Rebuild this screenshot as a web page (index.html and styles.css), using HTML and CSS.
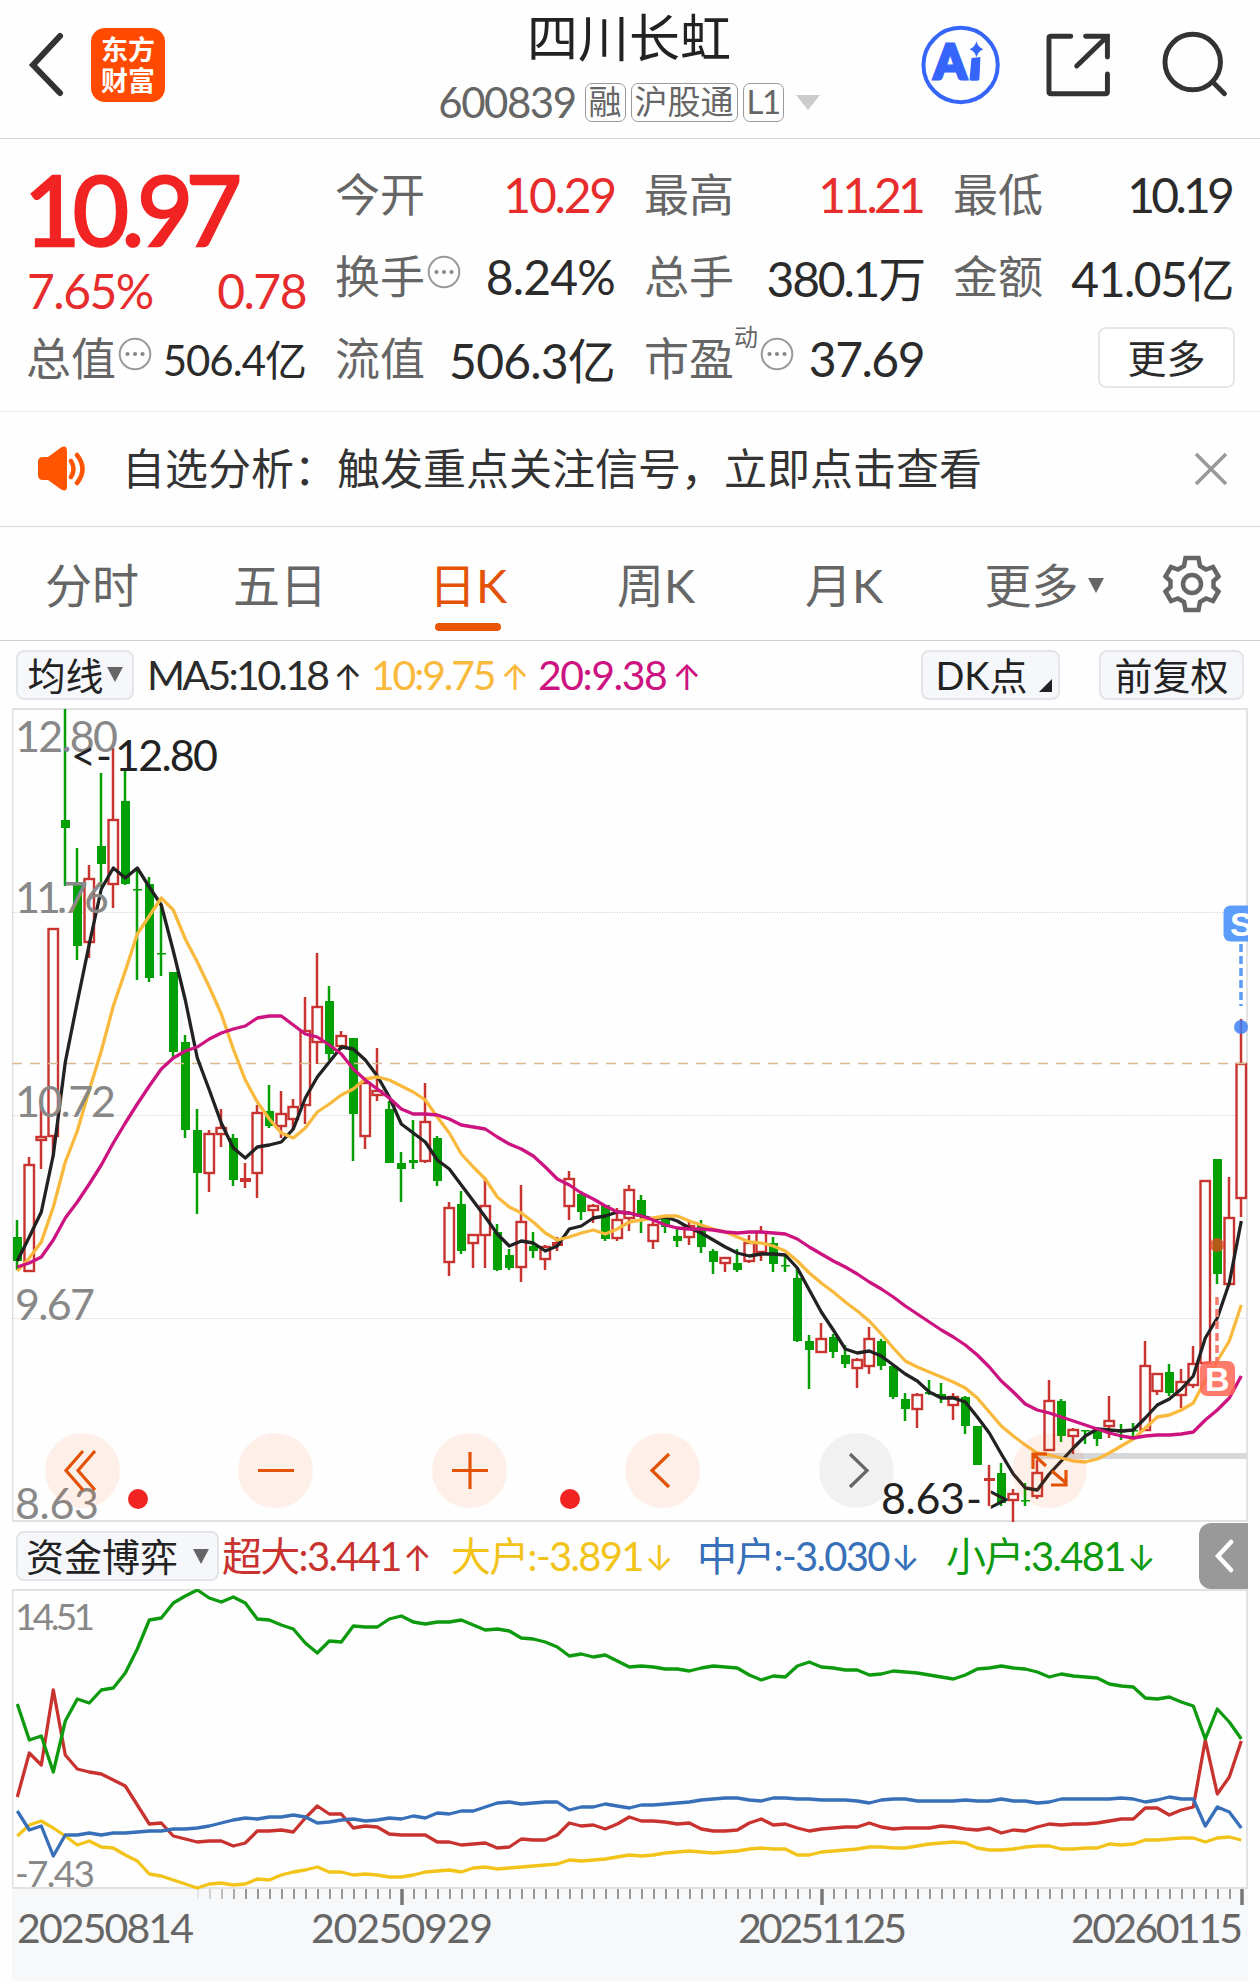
FILE: index.html
```html
<!DOCTYPE html>
<html lang="zh-CN">
<head>
    <meta charset="UTF-8">
    <meta name="viewport" content="width=device-width, initial-scale=1.0">
    <title>四川长虹 600839</title>
    <link rel="stylesheet" href="styles.css">
</head>
<body>

    <header class="topbar">
        <div class="topbar-left">
            <svg class="back" width="36" height="74" viewBox="0 0 36 74"><path d="M32 4 L5 33 L32 61" transform="translate(0 4)"/></svg>
            <div class="logo"><span>东方</span><span>财富</span></div>
        </div>
        <div class="stock">
            <h1>四川长虹</h1>
            <div class="code-row">
                <span class="code">600839</span>
                <span class="badge">融</span>
                <span class="badge">沪股通</span>
                <span class="badge">L1</span>
                <i class="tri tri-light"></i>
            </div>
        </div>
        <div class="topbar-right">
            <svg width="82" height="82" viewBox="0 0 82 82">
                <circle cx="41" cy="41" r="37.5" fill="none" stroke="#3565fb" stroke-width="4"/>
                <text class="ai" x="14" y="55">A</text>
                <path d="M52 34 L61 33 L60 55 Q60 57 58 57 L52 57 Q50 57 50 55 Z" fill="#3565fb"/>
                <path d="M57 17 Q58.500 23 64 25 Q58.500 27 57 33 Q55.500 27 50 25 Q55.500 23 57 17 Z" fill="#3565fb"/>
            </svg>
            <svg width="66" height="66" viewBox="0 0 66 66" class="line-icon">
                <path d="M25 4 H5 Q3 4 3 6 V60 Q3 62 5 62 H60 Q62 62 62 60 V42"/>
                <path d="M40 4 H62 V25 M61 5 L31 34"/>
            </svg>
            <svg width="68" height="68" viewBox="0 0 68 68" class="line-icon search">
                <circle cx="31" cy="31" r="28"/>
                <path d="M51 51 L63 63"/>
            </svg>
        </div>
    </header>

    <section class="quote">
        <div class="col">
            <div class="price">10.97</div>
            <div class="change"><span>7.65%</span><span>0.78</span></div>
            <div class="cell small"><label>总值<svg class="dots"><use href="#dots"/></svg></label><b>506.4亿</b></div>
        </div>
        <div class="col">
            <div class="cell"><label>今开</label><b class="red tight">10.29</b></div>
            <div class="cell"><label>换手<svg class="dots"><use href="#dots"/></svg></label><b class="loose">8.24%</b></div>
            <div class="cell"><label>流值</label><b class="loose">506.3亿</b></div>
        </div>
        <div class="col">
            <div class="cell"><label>最高</label><b class="red tighter">11.21</b></div>
            <div class="cell"><label>总手</label><b class="tight">380.1万</b></div>
            <div class="cell"><label>市盈<sup>动</sup><svg class="dots"><use href="#dots"/></svg></label><b>37.69</b></div>
        </div>
        <div class="col">
            <div class="cell"><label>最低</label><b class="tighter">10.19</b></div>
            <div class="cell"><label>金额</label><b>41.05亿</b></div>
            <div class="cell right"><button class="more">更多</button></div>
        </div>
    </section>

    <section class="notice">
        <svg width="50" height="48" viewBox="0 0 50 48">
            <path d="M1 17 Q1 12 6 12 H11 L22 4 Q30 -2 30 7 V41 Q30 49 22 43 L11 35 H6 Q1 35 1 30 Z" fill="#ff5400"/>
            <path d="M34 16 Q39 24 34 32 M40 10 Q51 24 40 38" fill="none" stroke="#ff5400" stroke-width="4.5" stroke-linecap="round"/>
        </svg>
        <p>自选分析：触发重点关注信号，立即点击查看</p>
        <svg class="close" width="34" height="34" viewBox="0 0 34 34"><path d="M2 2 L32 32 M32 2 L2 32"/></svg>
    </section>

    <nav class="tabs">
        <a>分时</a>
        <a>五日</a>
        <a class="active">日K</a>
        <a>周K</a>
        <a>月K</a>
        <a class="tab-more">更多<i class="tri tri-tab"></i></a>
        <svg class="gear" width="58" height="60" viewBox="0 0 58 60">
            <path d="M22.500 4 H35.500 L37 12 L43 15.500 L50 13 L55.500 22.500 L50.500 27 V33 L55.500 37.500 L50 47 L43 44.500 L37 48 L35.500 56 H22.500 L21 48 L15 44.500 L8 47 L2.500 37.500 L7.500 33 V27 L2.500 22.500 L8 13 L15 15.500 L21 12 Z"/>
            <circle cx="29" cy="30" r="9"/>
        </svg>
    </nav>

    <div class="bar ma-bar">
        <button class="chip chip-ma">均线<i class="tri tri-chip"></i></button>
        <span class="ma ma5">MA5:10.18<em>↑</em></span>
        <span class="ma ma10">10:9.75<em>↑</em></span>
        <span class="ma ma20">20:9.38<em>↑</em></span>
        <button class="chip chip-dk">DK点<i class="corner"></i></button>
        <button class="chip chip-fq">前复权</button>
    </div>

    <div class="chart">
        <svg id="kline" width="1236" height="814" viewBox="12 708 1236 814"></svg>
        <div class="tools">
            <span><svg viewBox="0 0 75 75"><path d="M38 18 L21 37.500 L38 57 M50 18 L33 37.500 L50 57"/></svg></span>
            <span><svg viewBox="0 0 75 75"><path d="M20 37.500 H56"/></svg></span>
            <span><svg viewBox="0 0 75 75"><path d="M20 37.500 H56 M38 19 V56"/></svg></span>
            <span><svg viewBox="0 0 75 75"><path d="M44 21 L27 37.500 L44 54"/></svg></span>
            <span class="off"><svg viewBox="0 0 75 75"><path d="M31 21 L48 37.500 L31 54"/></svg></span>
            <span><svg viewBox="0 0 75 75"><path d="M21 36 V21 H35 M21 21 L34 33 M40 38 L54 50 M54 37 V52 H39"/></svg></span>
        </div>
    </div>

    <div class="bar fund-bar">
        <button class="chip chip-fund">资金博弈<i class="tri tri-chip"></i></button>
        <span class="fund f1">超大:3.441<em>↑</em></span>
        <span class="fund f2">大户:-3.891<em>↓</em></span>
        <span class="fund f3">中户:-3.030<em>↓</em></span>
        <span class="fund f4">小户:3.481<em>↓</em></span>
        <span class="collapse"><svg width="20" height="34" viewBox="0 0 20 34"><path d="M17 3 L4 17 L17 31"/></svg></span>
    </div>

    <div class="chart sub">
        <svg id="fund" width="1236" height="393" viewBox="12 1589 1236 393"></svg>
    </div>

    <svg class="defs">
        <symbol id="dots" viewBox="0 0 34 34">
            <circle cx="17" cy="17" r="15.300" fill="none" stroke="#999" stroke-width="2"/>
            <circle cx="9.500" cy="17" r="2.100" fill="#888"/>
            <circle cx="17" cy="17" r="2.100" fill="#888"/>
            <circle cx="24.500" cy="17" r="2.100" fill="#888"/>
        </symbol>
    </svg>

    <script src="chart.js"></script>
</body>
</html>
```

FILE: styles.css
```css
* {
    box-sizing: border-box;
}

body {
    margin: 0;
    width: 1260px;
    height: 1984px;
    overflow: hidden;
    background: #fefefe;
    color: #2b2b2b;
    font-family: Lato, "Noto Sans CJK SC", sans-serif;
    font-weight: 400;
}

button {
    font: inherit;
    color: inherit;
    padding: 0;
}

.defs {
    display: none;
}

.tri {
    display: inline-block;
    border-style: solid;
    border-color: #666 transparent transparent;
    border-width: 15px 8px 0;
}

/* 顶部栏 */
.topbar {
    display: flex;
    justify-content: space-between;
    height: 139px;
    padding: 0 30px 0 28px;
    border-bottom: 1px solid #d5d5d5;
}

.topbar-left,
.topbar-right {
    display: flex;
    align-items: center;
    width: 310px;
    height: 130px;
}

.topbar-right {
    justify-content: flex-end;
    gap: 45px;
    height: 129px;
    padding-right: 1px;
}

.search {
    margin-left: 5px;
}

.back {
    fill: none;
    stroke: #333;
    stroke-width: 6;
    stroke-linecap: round;
}

.logo {
    display: flex;
    flex-direction: column;
    align-items: center;
    justify-content: center;
    width: 74px;
    height: 74px;
    margin-left: 27px;
    border-radius: 14px;
    background: #ff4a00;
    color: #fff;
    font-size: 27px;
    font-weight: 700;
    line-height: 31px;
}

.stock {
    text-align: center;
}

.stock h1 {
    margin: 0;
    font-size: 51px;
    font-weight: 400;
    line-height: 76px;
    color: #222;
}

.code-row {
    display: flex;
    align-items: center;
    justify-content: center;
    margin-top: 6px;
    gap: 5px;
    height: 40px;
    color: #666;
}

.code {
    font-size: 42px;
    letter-spacing: -1.500px;
    margin-right: 4px;
}

.badge {
    height: 39px;
    padding: 0 3px;
    border: 1.500px solid #999;
    border-radius: 7px;
    font-size: 33px;
    line-height: 35px;
}

.badge:nth-child(4) {
    letter-spacing: -1.500px;
}

.tri-light {
    margin-left: 7px;
    border-top-color: #ccc;
    border-width: 15px 12px 0;
}

.ai {
    font-family: Lato, sans-serif;
    font-size: 47px;
    font-weight: 900;
    fill: #3565fb;
    stroke: #3565fb;
    stroke-width: 3;
}

.line-icon {
    fill: none;
    stroke: #333;
    stroke-width: 5;
    stroke-linecap: round;
}

/* 行情数据 */
.quote {
    display: grid;
    grid-template-columns: repeat(4, 279px);
    column-gap: 30px;
    height: 273px;
    padding: 14px 0 0 27px;
    border-bottom: 1px solid #ececec;
}

.cell {
    display: flex;
    align-items: center;
    justify-content: space-between;
    height: 82px;
    font-size: 45px;
}

.cell.right {
    justify-content: flex-end;
}

.cell label {
    display: flex;
    align-items: center;
    margin: -3px 0 0 -1px;
    color: #666;
    white-space: nowrap;
}

.cell b {
    font-size: 48px;
    font-weight: 400;
    letter-spacing: -1.500px;
    white-space: nowrap;
}

.cell.small b {
    margin-top: -2px;
    font-size: 42px;
    letter-spacing: -1px;
}

.cell .loose {
    letter-spacing: -0.800px;
}

.cell .tight {
    letter-spacing: -2.200px;
}

.cell .tighter {
    margin-right: 2px;
    letter-spacing: -3.800px;
}

.cell .red,
.change {
    color: #e62c2c;
}

.cell sup {
    margin: -40px 0 0;
    font-size: 24px;
    line-height: 30px;
}

.dots {
    width: 34px;
    height: 34px;
    margin: -5px 0 0 2px;
}

.price {
    height: 94px;
    margin-left: -3px;
    padding-top: 9px;
    font-size: 97px;
    line-height: 94px;
    letter-spacing: -7.500px;
    color: #f12323;
    -webkit-text-stroke: 2.500px #f12323;
}

.change {
    display: flex;
    justify-content: space-between;
    height: 70px;
    font-size: 48px;
    line-height: 88px;
    letter-spacing: -1.500px;
}

.more {
    width: 137px;
    height: 61px;
    margin: -1px -2px 0 0;
    border: 2px solid #e6e6e6;
    border-radius: 8px;
    background: #fff;
    font-size: 39px;
    line-height: 46px;
}

/* 提示 */
.notice {
    display: flex;
    align-items: center;
    height: 115px;
    padding: 0 32px 1px 37px;
    border-bottom: 1px solid #d8d8d8;
}

.notice p {
    flex: 1;
    margin: 0 0 0 35px;
    font-size: 43px;
    line-height: 60px;
    color: #333;
}

.close {
    fill: none;
    stroke: #999;
    stroke-width: 3.500;
}

/* 周期切换 */
.tabs {
    display: flex;
    align-items: center;
    height: 114px;
    border-bottom: 1px solid #d0d0d0;
    font-size: 47px;
    color: #666;
}

.tabs a {
    position: relative;
    width: 188px;
    height: 113px;
    padding-right: 4px;
    line-height: 117px;
    text-align: center;
}

.tabs .active {
    color: #e35205;
}

.tabs .active::after {
    content: "";
    position: absolute;
    left: 59px;
    bottom: 9px;
    width: 66px;
    height: 8px;
    border-radius: 4px;
    background: #e85400;
}

.tabs .tab-more {
    width: 212px;
}

.tri-tab {
    margin: 0 0 10px 9px;
}

.gear {
    margin-left: 11px;
    fill: none;
    stroke: #666;
    stroke-width: 4.500;
}

/* 指标行 */
.bar {
    position: relative;
    display: flex;
    align-items: center;
    height: 67px;
    padding: 0 16px;
    white-space: nowrap;
}

.chip {
    display: flex;
    align-items: center;
    justify-content: center;
    height: 50px;
    border: 2px solid #e4e5e9;
    border-radius: 8px;
    background: #f6f7fa;
    font-size: 38px;
    line-height: 40px;
    color: #222;
}

.chip-ma {
    width: 118px;
}

.tri-chip {
    margin-left: 3px;
}

.ma {
    font-size: 41px;
    letter-spacing: -2.700px;
}

.bar em {
    font-family: Inter, sans-serif;
    font-style: normal;
    font-size: 35px;
    letter-spacing: 0;
}

.ma5 {
    width: 224px;
    margin-left: 13px;
}

.ma10 {
    width: 167px;
    letter-spacing: -2.200px;
    color: #f9b93d;
}

.ma20 {
    letter-spacing: -1.500px;
    color: #cc1380;
}

.ma em {
    margin-left: 6px;
}

.chip-dk {
    width: 139px;
    margin-left: auto;
}

.corner {
    align-self: flex-end;
    margin: 0 -6px 6px 11px;
    border-style: solid;
    border-width: 0 0 13px 13px;
    border-color: transparent transparent #222;
}

.chip-fq {
    width: 145px;
    margin-left: 39px;
}

/* 图表 */
.chart {
    position: relative;
    width: 1236px;
    height: 814px;
    margin-left: 12px;
}

.chart > svg {
    display: block;
}

.sub {
    height: 393px;
}

.tools {
    position: absolute;
    left: 33px;
    top: 725px;
    display: flex;
    justify-content: space-between;
    width: 1042px;
}

.tools span {
    width: 75px;
    height: 75px;
    border-radius: 50%;
    background: rgba(255, 96, 20, 0.09);
}

.tools .off {
    background: rgba(0, 0, 0, 0.05);
}

.tools svg {
    display: block;
    fill: none;
    stroke: #e35205;
    stroke-width: 3.200;
}

.tools .off svg {
    stroke: #666;
}

.chart text {
    font-size: 43px;
    fill: #888;
}

.chart .peak {
    fill: #222;
}

.chart .small-num {
    font-size: 37px;
}

.chart .date {
    font-size: 41px;
    fill: #666;
}

.chart .mark {
    font-family: "Liberation Sans", sans-serif;
    font-size: 34px;
    font-weight: 700;
    fill: #fff;
}

/* 资金博弈 */
.fund-bar {
    padding: 0 12px 0 16px;
}

.fund-bar .chip {
    margin-top: 1px;
    line-height: 36px;
}

.chip-fund {
    width: 203px;
}

.chip-fund .tri {
    margin-left: 15px;
}

.fund {
    margin-top: -3px;
    font-size: 40px;
    letter-spacing: -1.700px;
}

.fund em {
    margin-left: 2px;
}

.f1 { width: 229px; margin-left: 3px; color: #c8322f; }
.f2 { width: 246px; color: #f2c318; }
.f3 { width: 249px; color: #3770b8; }
.f4 { color: #0e9a0e; }

.collapse {
    display: flex;
    align-items: center;
    width: 49px;
    height: 66px;
    margin-left: auto;
    padding-left: 15px;
    border-radius: 12px 0 0 12px;
    background: #999;
}

.collapse svg {
    fill: none;
    stroke: #fff;
    stroke-width: 4.500;
    stroke-linecap: round;
}
```

FILE: chart.js
```javascript
var STEP = 12, X0 = 17;
var RED = "#c83430", GREEN = "#02a002";

// 每根K线: 类型(r空心红 f实心红 g绿), 最高, 实体上沿, 实体下沿, 最低
var candles = [
    ["g",1220,1237,1261,1270],["r",1157,1164,1272,1272],["r",1101,1136,1141,1169],["r",928,928,1137,1157],["g",709,820,828,886],
    ["g",848,884,946,960],["r",865,878,943,958],["g",773,846,864,887],["r",748,819,885,908],["g",771,801,884,885],
    ["g",868,889,890,980],["g",877,884,978,982],["g",905,953,954,976],["g",972,972,1052,1058],["g",1035,1042,1130,1138],
    ["g",1109,1130,1173,1214],["r",1130,1133,1174,1192],["r",1109,1127,1135,1147],["g",1134,1138,1180,1186],["f",1163,1178,1182,1188],
    ["r",1105,1112,1174,1198],["g",1085,1111,1126,1128],["r",1091,1113,1127,1138],["r",1099,1106,1120,1130],["r",997,1030,1106,1124],
    ["r",953,1006,1043,1064],["g",986,1001,1054,1060],["r",1031,1035,1047,1050],["g",1038,1038,1114,1161],["r",1082,1082,1137,1149],
    ["r",1048,1090,1096,1101],["g",1101,1109,1163,1163],["g",1152,1163,1169,1202],["g",1120,1160,1163,1169],["r",1083,1121,1162,1163],
    ["g",1136,1138,1181,1186],["r",1202,1207,1263,1276],["g",1191,1204,1251,1254],["r",1234,1234,1244,1268],["r",1177,1205,1236,1268],
    ["g",1224,1232,1270,1271],["g",1249,1255,1268,1270],["r",1185,1221,1268,1282],["g",1232,1246,1251,1258],["r",1245,1246,1260,1270],
    ["f",1237,1242,1246,1251],["r",1171,1178,1207,1220],["g",1191,1194,1212,1220],["r",1204,1205,1211,1223],["g",1205,1205,1239,1241],
    ["r",1208,1219,1239,1241],["r",1185,1189,1219,1231],["g",1195,1200,1217,1233],["r",1219,1224,1242,1249],["g",1217,1219,1227,1233],
    ["g",1229,1236,1241,1247],["r",1222,1225,1238,1245],["g",1220,1225,1247,1253],["g",1249,1251,1262,1274],["r",1257,1257,1264,1272],
    ["g",1249,1263,1270,1272],["r",1235,1242,1262,1263],["r",1226,1231,1253,1261],["g",1237,1243,1264,1272],["g",1256,1265,1266,1272],
    ["g",1268,1278,1341,1342],["g",1335,1341,1350,1389],["r",1323,1338,1353,1353],["g",1334,1337,1352,1358],["g",1345,1355,1364,1368],
    ["r",1358,1359,1369,1388],["r",1327,1338,1367,1374],["g",1339,1341,1366,1370],["g",1366,1366,1397,1399],["g",1393,1399,1409,1421],
    ["r",1393,1394,1410,1428],["g",1380,1392,1394,1395],["g",1383,1394,1398,1403],["r",1393,1396,1406,1420],["g",1396,1397,1426,1434],
    ["g",1426,1426,1465,1465],["f",1465,1478,1481,1506],["g",1463,1473,1503,1506],["r",1489,1493,1501,1522],["g",1483,1500,1501,1506],
    ["r",1460,1472,1497,1499],["r",1380,1400,1451,1451],["g",1399,1401,1436,1442],["r",1428,1429,1437,1454],["g",1430,1430,1431,1444],
    ["g",1428,1430,1439,1446],["r",1396,1420,1427,1438],["g",1424,1431,1432,1440],["g",1423,1430,1431,1438],["r",1341,1365,1431,1431],
    ["r",1373,1373,1392,1395],["g",1364,1372,1393,1396],["r",1369,1381,1396,1408],["r",1346,1363,1386,1388],["r",1180,1180,1364,1364],
    ["g",1159,1159,1274,1284],["r",1177,1217,1285,1285],["r",1019,1063,1199,1217]
];

var ma5 = [1261,1237,1212,1155,1062,1002,944,889,868,878,868,887,905,951,1000,1058,1090,1123,1148,1158,1147,1145,1142,1129,1098,1077,1062,1047,1049,1060,1076,1097,1124,1133,1142,1160,1169,1185,1201,1217,1234,1246,1241,1243,1251,1246,1229,1226,1218,1216,1212,1213,1216,1219,1217,1221,1228,1233,1240,1247,1253,1256,1254,1254,1255,1268,1290,1312,1330,1349,1353,1351,1356,1365,1374,1381,1392,1398,1398,1402,1417,1433,1454,1474,1488,1490,1474,1461,1448,1436,1429,1430,1431,1430,1418,1405,1399,1389,1376,1338,1318,1283,1221];
var ma10 = [1271,1258,1242,1207,1162,1131,1090,1051,1006,971,934,916,898,910,939,962,987,1014,1049,1080,1102,1119,1133,1138,1128,1112,1104,1095,1089,1079,1077,1080,1086,1092,1100,1117,1133,1154,1167,1179,1197,1207,1213,1222,1233,1240,1237,1233,1230,1234,1229,1222,1220,1218,1216,1216,1221,1225,1229,1232,1237,1242,1243,1246,1251,1261,1273,1283,1292,1302,1311,1321,1334,1348,1361,1367,1372,1377,1382,1388,1398,1412,1426,1436,1445,1453,1455,1458,1461,1462,1459,1453,1446,1439,1428,1417,1415,1410,1403,1380,1361,1341,1305];
var ma20 = [1267,1263,1257,1240,1218,1202,1184,1165,1143,1123,1104,1086,1069,1058,1051,1047,1039,1033,1029,1026,1018,1016,1016,1025,1034,1037,1045,1054,1069,1080,1089,1098,1109,1114,1114,1115,1119,1125,1127,1129,1137,1144,1149,1156,1167,1179,1185,1193,1199,1206,1212,1213,1216,1220,1225,1228,1229,1229,1230,1232,1233,1232,1232,1233,1234,1239,1247,1254,1261,1267,1274,1282,1289,1297,1306,1314,1322,1330,1337,1345,1355,1367,1381,1392,1404,1410,1413,1417,1421,1425,1429,1433,1436,1438,1436,1435,1435,1434,1432,1420,1410,1398,1376];

var retail = [1704,1740,1736,1772,1721,1699,1703,1690,1688,1673,1649,1620,1618,1603,1596,1590,1598,1602,1597,1603,1619,1620,1625,1629,1643,1653,1641,1642,1626,1627,1627,1619,1616,1622,1624,1622,1622,1620,1625,1630,1629,1631,1638,1639,1642,1647,1656,1654,1657,1655,1661,1667,1666,1667,1669,1669,1671,1668,1666,1667,1668,1675,1680,1676,1677,1666,1662,1667,1668,1670,1670,1675,1674,1671,1672,1673,1675,1677,1679,1675,1669,1668,1666,1668,1669,1672,1677,1674,1676,1677,1678,1684,1686,1687,1698,1699,1697,1702,1706,1739,1709,1722,1739];
var huge = [1797,1753,1765,1690,1755,1769,1772,1774,1780,1786,1805,1824,1823,1836,1839,1842,1841,1841,1846,1843,1831,1831,1830,1832,1818,1806,1814,1814,1828,1826,1827,1834,1835,1835,1835,1842,1842,1845,1844,1843,1848,1847,1839,1840,1840,1835,1823,1826,1825,1829,1824,1817,1821,1821,1822,1824,1823,1829,1831,1831,1830,1823,1819,1825,1824,1828,1831,1829,1828,1827,1827,1823,1827,1829,1828,1828,1828,1826,1827,1829,1830,1828,1833,1830,1831,1827,1824,1825,1824,1824,1823,1821,1819,1819,1808,1808,1815,1810,1807,1740,1794,1777,1741];
var mid = [1811,1830,1826,1856,1835,1835,1833,1835,1833,1833,1832,1831,1831,1829,1829,1828,1826,1823,1820,1818,1819,1817,1817,1815,1817,1823,1822,1820,1819,1821,1820,1818,1819,1816,1818,1813,1814,1811,1811,1807,1803,1802,1804,1803,1802,1802,1810,1807,1807,1804,1806,1808,1805,1805,1804,1803,1802,1800,1799,1798,1798,1800,1801,1798,1798,1799,1799,1800,1800,1800,1801,1803,1800,1799,1799,1801,1801,1801,1801,1800,1801,1801,1799,1801,1801,1803,1802,1799,1799,1799,1799,1799,1798,1799,1802,1800,1797,1799,1799,1826,1807,1812,1828];
var big = [1836,1825,1821,1828,1836,1845,1841,1847,1848,1855,1861,1874,1876,1880,1884,1888,1884,1883,1885,1884,1879,1880,1875,1872,1870,1867,1872,1872,1875,1874,1875,1877,1877,1875,1872,1871,1870,1872,1868,1867,1869,1868,1867,1866,1865,1864,1860,1861,1860,1859,1857,1855,1856,1855,1853,1852,1851,1852,1853,1852,1851,1849,1848,1849,1849,1855,1855,1852,1851,1850,1849,1847,1847,1848,1848,1846,1844,1843,1842,1843,1848,1850,1850,1849,1847,1846,1846,1849,1849,1848,1848,1844,1845,1844,1840,1840,1839,1838,1838,1842,1838,1837,1840];

function line(x1, y1, x2, y2, color, width, extra) {
    return '<path d="M' + x1 + ' ' + y1 + ' L' + x2 + ' ' + y2 + '" fill="none" stroke="' + color + '" stroke-width="' + width + '" ' + (extra || '') + '/>';
}

function series(data, color, width) {
    var pts = data.map(function (y, i) { return (X0 + 0.3 + i * STEP) + ',' + y; }).join(' ');
    return '<polyline points="' + pts + '" fill="none" stroke="' + color + '" stroke-width="' + width + '" stroke-linejoin="round"/>';
}

function label(text, x, y, length, cls) {
    return '<text x="' + x + '" y="' + y + '" textLength="' + length + '" class="' + (cls || '') + '">' + text + '</text>';
}

function candle(c, i) {
    var x = X0 + i * STEP;
    if (c[0] === "r") {
        return line(x, c[1], x, c[2], RED, 2.5) + line(x, c[3], x, c[4], RED, 2.5) +
            '<rect x="' + (x - 4.5) + '" y="' + (c[2] + 1) + '" width="9.500" height="' + Math.max(c[3] - c[2] - 2, 2) + '" fill="#fefefe" stroke="' + RED + '" stroke-width="2.400"/>';
    }
    var color = c[0] === "g" ? GREEN : RED;
    var w = c[0] === "f" ? 11 : 9;
    return line(x, c[1], x, c[4], color, 2.5) +
        '<rect x="' + (x - w / 2 + 0.5) + '" y="' + c[2] + '" width="' + w + '" height="' + Math.max(c[3] - c[2], 1.5) + '" fill="' + color + '"/>';
}

// K线主图
var k = '<rect x="12.500" y="709" width="1234.500" height="812" fill="#fefefe" stroke="#e2e2e2" stroke-width="2"/>';
[912.5, 1115.5, 1318.5].forEach(function (y) {
    k += line(12, y, 1247, y, "#ccc", 1, 'stroke-dasharray="1 1.500"');
});
k += '<rect x="1033" y="1453" width="214" height="6" fill="#d5d8db"/>';
k += candles.map(candle).join('');
k += line(12, 1063.5, 1247, 1063.5, "#d9b98f", 1.5, 'stroke-dasharray="10 8"');
k += series(ma5, "#222", 3.3) + series(ma10, "#f9b93d", 3.3) + series(ma20, "#cc1380", 3.3);
k += label("12.80", 15, 752, 103) + label("11.76", 15, 913, 94) + label("10.72", 15, 1117, 101) + label("9.67", 15, 1320, 80) + label("8.63", 15, 1519, 84);
k += label("&lt;", 71, 771, 23, "peak") + label("-", 96, 771, 18, "peak") + label("12.80", 115, 771, 103, "peak");
k += label("8.63", 881, 1514, 84, "peak") + label("-", 966, 1514, 17, "peak") + label("&gt;", 986, 1514, 23, "peak");
k += '<circle cx="138" cy="1499" r="10" fill="#f12323"/><circle cx="570" cy="1499" r="10" fill="#f12323"/>';

// 买卖点标记
k += '<rect x="1223.500" y="905.500" width="36" height="36" rx="7" fill="#5c9dfb"/><text class="mark" x="1230" y="936">S</text>';
k += line(1241, 944, 1241, 1006, "#5c9dfb", 3.5, 'stroke-dasharray="8 4"');
k += '<circle cx="1241" cy="1027" r="7" fill="#3f80f4" opacity="0.850"/>';
k += '<circle cx="1217" cy="1245" r="7" fill="#e0491e" opacity="0.800"/>';
k += line(1217, 1297, 1217, 1361, "#f67a6e", 3.5, 'stroke-dasharray="8 4"');
k += '<rect x="1200" y="1361" width="35" height="35" rx="7" fill="#ff6553" opacity="0.850"/><text class="mark" x="1205" y="1391">B</text>';
document.getElementById("kline").innerHTML = k;

// 资金博弈副图
var f = '<rect x="12" y="1889" width="1236" height="92" fill="#f7f8fa"/>';
f += '<rect x="12.500" y="1590" width="1234.500" height="298" fill="#fefefe" stroke="#e2e2e2" stroke-width="2"/>';
for (var i = 15; i < 103; i++) {
    var x = X0 + i * STEP + 1, major = (i === 32 || i === 67 || i === 102);
    f += line(x, 1889, x, major ? 1905 : 1899, "#777", major ? 3.5 : 1.5, 'opacity="' + Math.min(1, (i - 14) / 5) + '"');
}
f += label("14.51", 15, 1629.5, 80, "small-num") + label("-7.43", 15, 1887, 80, "small-num");
f += series(big, "#f2c318", 3.3) + series(huge, "#c8322f", 3.3) + series(mid, "#3770b8", 3.3) + series(retail, "#0e9a0e", 3.3);
f += label("20250814", 17, 1943, 177, "date") + label("20250929", 311, 1943, 182, "date") + label("20251125", 738, 1943, 169, "date") + label("20260115", 1071, 1943, 172, "date");
document.getElementById("fund").innerHTML = f;
```
